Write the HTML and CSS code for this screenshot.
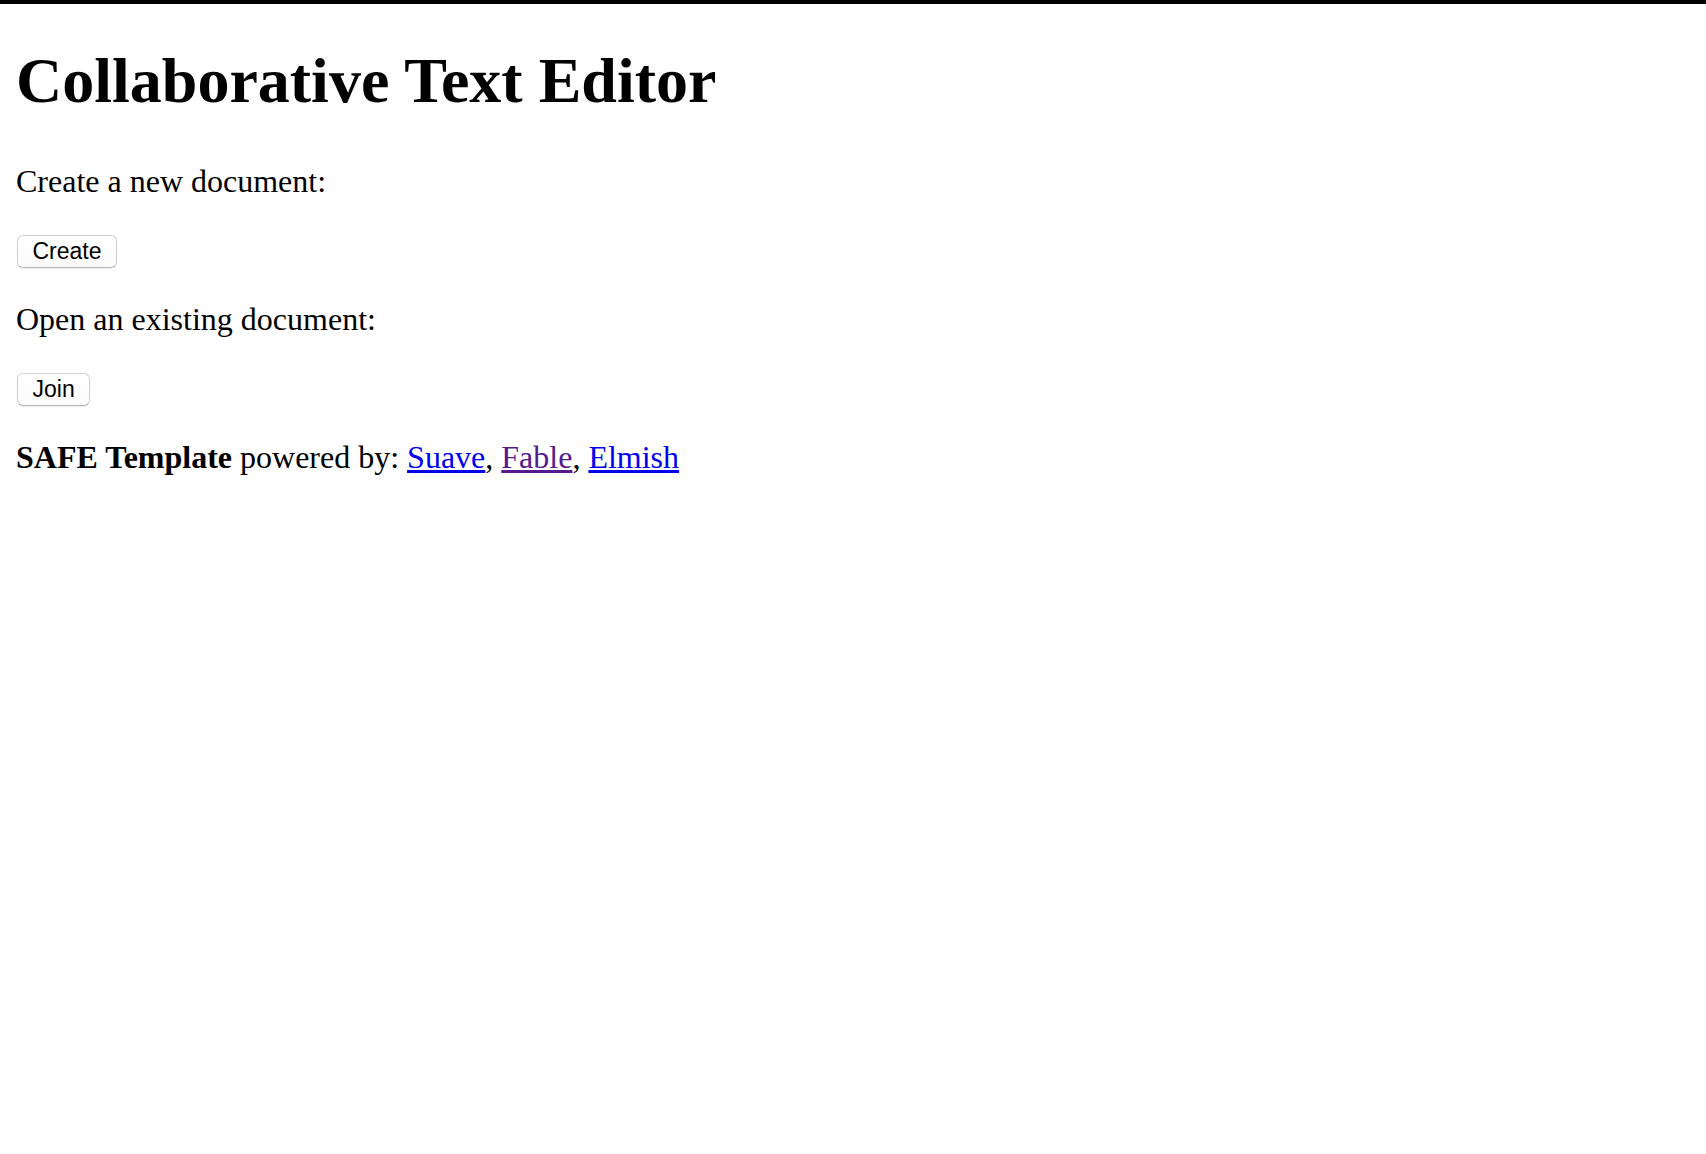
FILE: index.html
```html
<!DOCTYPE html>
<html lang="en">
<head>
<meta charset="utf-8">
<title>Collaborative Text Editor</title>
<link rel="stylesheet" href="styles.css">
</head>
<body>
<div class="topbar"></div>
<main class="page">
  <h1 class="title">Collaborative Text Editor</h1>
  <p class="label">Create a new document:</p>
  <div class="action"><button class="btn" type="button">Create</button></div>
  <p class="label">Open an existing document:</p>
  <div class="action"><button class="btn" type="button">Join</button></div>
  <p class="footer"><strong>SAFE Template</strong> powered by: <a class="link" href="#suave">Suave</a>, <a class="link visited" href="#fable">Fable</a>, <a class="link" href="#elmish">Elmish</a></p>
</main>
</body>
</html>
```
FILE: styles.css
```css
html, body {
  background: #ffffff;
}
body {
  margin: 0;
  font-family: "Liberation Serif", "Times New Roman", serif;
  font-size: 32px;
  color: #000000;
}
.topbar {
  height: 4px;
  background: #000000;
}
.page {
  margin: 0 16px;
}
.title {
  font-size: 64px;
  font-weight: bold;
  margin: 40px 0 45px;
}
.label,
.footer {
  margin: 32px 0;
}
.action {
  display: flex;
  align-items: flex-start;
  margin: 35px 0 33px;
}
.btn {
  font-family: "Liberation Sans", Arial, sans-serif;
  font-size: 23px;
  height: 33px;
  padding: 0 14.5px;
  margin: 0 0 0 1px;
  color: #000000;
  background: linear-gradient(#ffffff, #fbfbfb);
  border: 1px solid #cfcfcf;
  border-bottom-color: #b8b8b8;
  border-radius: 6px;
  box-shadow: 0 1px 1px rgba(0, 0, 0, 0.08);
}
.link {
  color: #0000ee;
  text-decoration: underline;
}
.link.visited {
  color: #551a8b;
}
```
